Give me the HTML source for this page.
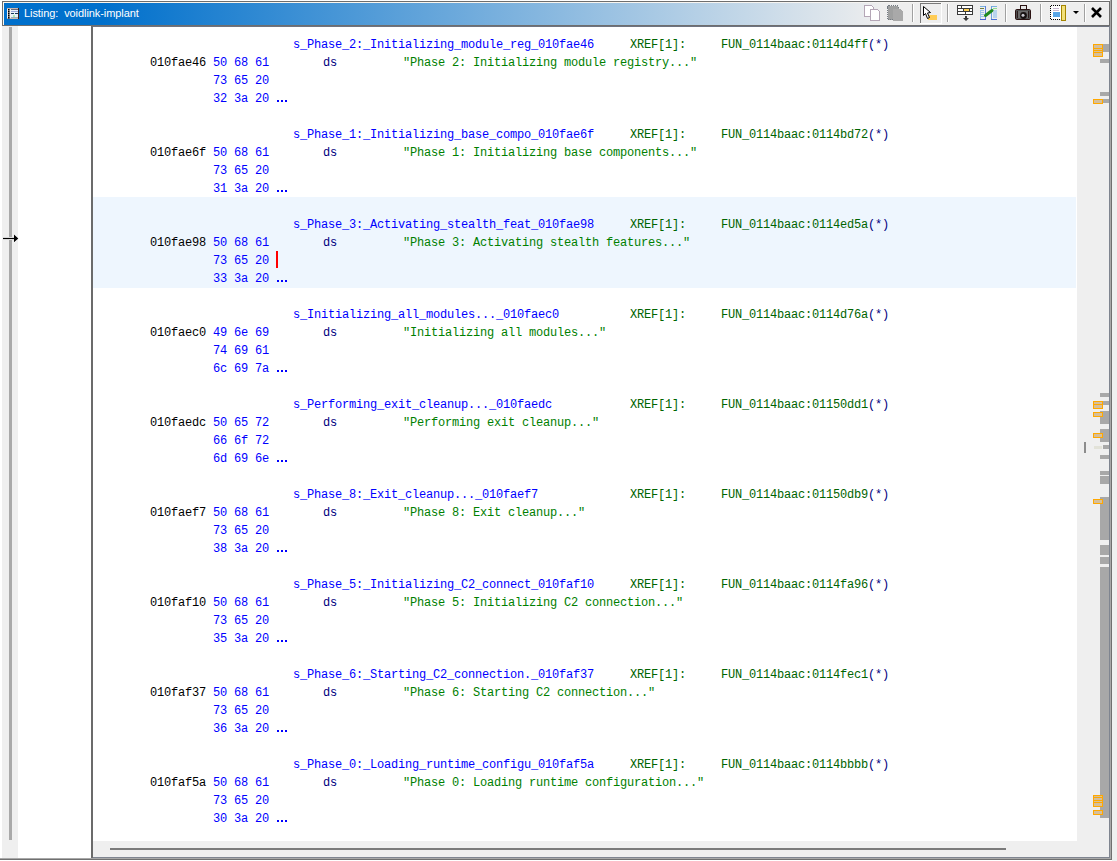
<!DOCTYPE html>
<html><head><meta charset="utf-8">
<style>
html,body{margin:0;padding:0}
body{width:1117px;height:861px;position:relative;overflow:hidden;background:#fff;font-family:"Liberation Sans",sans-serif}
.a{position:absolute}
#title{position:absolute;left:2px;top:1px;width:1106px;height:23px;border:1px solid #6e6e6e;
  background:linear-gradient(to right,#0070cc 0px,#0070cc 100px,#eeeeee 880px,#eeeeee 100%);}
#title .hl{position:absolute;left:0;top:0;width:100%;height:1px;background:linear-gradient(to right,#fdf6ea,#f4f4f4)}
#title .hl2{position:absolute;left:0;top:0;width:1px;height:100%;background:#fdf8ee}
#ttext{position:absolute;left:21px;top:4px;font-size:11px;letter-spacing:-0.08px;line-height:14px;color:#fff;white-space:pre}
.t{position:absolute;font-family:"Liberation Mono",monospace;font-size:12px;letter-spacing:-0.2px;line-height:18px;white-space:pre;height:18px}
.lab{color:#0000ff}
.xr{color:#006400}
.nv{color:#000080}
.adr{color:#000000}
.byt{color:#0000ff}
.str{color:#008000}
.ell{position:absolute;width:12px;height:3px}
.ell i{position:absolute;top:0;width:2px;height:2px;background:#0000ff}
.ell i:nth-child(1){left:0px}.ell i:nth-child(2){left:4px}.ell i:nth-child(3){left:8px}
.gb{position:absolute;background:#a8a8a8}
.mk{position:absolute;left:1093px;width:10px;background:#ffa800}
.mk b{position:absolute;left:1px;width:8px;background:#d5bf9c}
.sep{position:absolute;top:4px;width:1px;height:18px;background:#8a8a8a}
</style></head><body>
<!-- right outside -->
<div class="a" style="left:1112px;top:0;width:5px;height:861px;background:#f0f0f0"></div>
<!-- title bar -->
<div id="title"><div class="hl"></div><div class="hl2"></div>
  <div id="ttext">Listing:  voidlink-implant</div>
</div>
<!-- title icon -->
<svg class="a" style="left:0;top:0" width="24" height="24" viewBox="0 0 24 24" shape-rendering="crispEdges">
  <rect x="7" y="8" width="12" height="11" fill="#c8b8b0"/>
  <rect x="7" y="9" width="4" height="9" fill="#f4f0f0"/>
  <rect x="8" y="9" width="1" height="1" fill="#000"/><rect x="8" y="11" width="1" height="1" fill="#000"/><rect x="8" y="13" width="1" height="1" fill="#000"/><rect x="8" y="15" width="1" height="1" fill="#000"/><rect x="8" y="17" width="1" height="1" fill="#000"/>
  <rect x="8" y="9" width="1.6" height="1.6" fill="#000" shape-rendering="auto"/><rect x="8" y="11" width="1.6" height="1.6" fill="#000" shape-rendering="auto"/><rect x="8" y="13" width="1.6" height="1.6" fill="#000" shape-rendering="auto"/><rect x="8" y="15" width="1.6" height="1.6" fill="#000" shape-rendering="auto"/><rect x="8" y="17" width="1.6" height="1.6" fill="#000" shape-rendering="auto"/>
  <rect x="11" y="9" width="7" height="9" fill="#e8f0f8"/>
  <rect x="11" y="9" width="7" height="1" fill="#6a6a7a"/>
  <rect x="11" y="11" width="7" height="1" fill="#9aa8d8"/>
  <rect x="11" y="13" width="3" height="1" fill="#183858"/><rect x="15" y="13" width="3" height="1" fill="#183858"/>
  <rect x="13" y="15" width="2" height="2" fill="#b0e8b0"/>
  <rect x="11" y="17" width="7" height="1" fill="#98b0b8"/>
  <rect x="18" y="8" width="1" height="11" fill="#3a2020"/>
</svg>
<!-- left strip -->
<div class="a" style="left:2px;top:26px;width:16px;height:832px;background:#efefef"></div>
<div class="a" style="left:9px;top:27px;width:3px;height:813px;background:#a9a9a9"></div>
<!-- arrow -->
<svg class="a" style="left:2px;top:232px" width="18" height="12" viewBox="0 0 18 12">
  <line x1="1" y1="6.5" x2="13" y2="6.5" stroke="#fff" stroke-width="3"/>
  <polygon points="12,1.5 17,6.5 12,11.5" fill="#fff"/>
  <line x1="1" y1="6.5" x2="13" y2="6.5" stroke="#000" stroke-width="1.3"/>
  <polygon points="12,2.5 16.3,6.5 12,10.3" fill="#000"/>
</svg>
<!-- divider -->
<div class="a" style="left:91px;top:26px;width:2px;height:832px;background:#6b6b6b"></div>
<div class="a" style="left:93px;top:26px;width:1016px;height:1px;background:#6e7380"></div>
<!-- highlight band -->
<div class="a" style="left:93px;top:197px;width:983px;height:91px;background:#eef6fe"></div>
<!-- overview bar -->
<div class="a" style="left:1077px;top:27px;width:32px;height:830px;background:#efefef"></div>
<div class="a" style="left:1084px;top:442px;width:2px;height:11px;background:#8c8c8c"></div>
<div class="gb" style="left:1103px;top:44px;width:6px;height:8px"></div>
<div class="gb" style="left:1100px;top:59px;width:9px;height:4px"></div>
<div class="gb" style="left:1100px;top:92px;width:9px;height:4px"></div>
<div class="gb" style="left:1103px;top:99px;width:6px;height:4px"></div>
<div class="gb" style="left:1100px;top:393px;width:9px;height:4px"></div>
<div class="gb" style="left:1103px;top:401px;width:6px;height:4px"></div>
<div class="gb" style="left:1100px;top:411px;width:9px;height:13px"></div>
<div class="gb" style="left:1100px;top:429px;width:9px;height:13px"></div>
<div class="gb" style="left:1103px;top:445px;width:6px;height:4px"></div>
<div class="gb" style="left:1100px;top:455px;width:9px;height:4px"></div>
<div class="gb" style="left:1100px;top:471px;width:9px;height:4px"></div>
<div class="gb" style="left:1100px;top:476px;width:9px;height:8px"></div>
<div class="gb" style="left:1100px;top:497px;width:9px;height:43px"></div>
<div class="gb" style="left:1100px;top:545px;width:9px;height:10px"></div>
<div class="gb" style="left:1100px;top:557px;width:9px;height:7px"></div>
<div class="gb" style="left:1100px;top:567px;width:9px;height:251px"></div>
<div class="mk" style="top:44px;height:13px"><b style="top:1px;height:3px"></b><b style="top:5px;height:1px"></b><b style="top:7px;height:1px"></b><b style="top:9px;height:3px"></b></div>
<div class="mk" style="top:99px;height:5px"><b style="top:1px;height:3px"></b></div>
<div class="mk" style="top:401px;height:8px"><b style="top:1px;height:2px"></b><b style="top:4px;height:3px"></b></div>
<div class="mk" style="top:412px;height:5px"><b style="top:1px;height:3px"></b></div>
<div class="mk" style="top:433px;height:5px"><b style="top:1px;height:3px"></b></div>
<div class="mk" style="top:499px;height:5px"><b style="top:1px;height:3px"></b></div>
<div class="mk" style="top:795px;height:12px"><b style="top:1px;height:1px"></b><b style="top:3px;height:2px"></b><b style="top:6px;height:1px"></b><b style="top:8px;height:3px"></b></div>
<div class="mk" style="top:810px;height:5px"><b style="top:1px;height:3px"></b></div>
<div class="a" style="left:1094px;top:446px;width:8px;height:3px;background:#e2e2d8"></div>

<!-- h scrollbar -->
<div class="a" style="left:93px;top:841px;width:984px;height:16px;background:#efefef"></div>
<div class="a" style="left:110px;top:848px;width:896px;height:2px;background:#7a7a7a"></div>
<!-- frame lines -->
<div class="a" style="left:93px;top:857px;width:1017px;height:1px;background:#7f8590"></div>
<div class="a" style="left:0px;top:858px;width:1111px;height:1px;background:#a8a8a8"></div>
<div class="a" style="left:0px;top:859px;width:1112px;height:1px;background:#707070"></div>
<div class="a" style="left:1109px;top:26px;width:1px;height:832px;background:#7f8590"></div>
<div class="a" style="left:1110px;top:0px;width:1px;height:859px;background:#a8a8a8"></div>
<div class="a" style="left:1111px;top:0px;width:1px;height:860px;background:#707070"></div>
<!-- red cursor -->
<div class="a" style="left:276px;top:251px;width:2px;height:17px;background:#ff0000"></div>
<div class="t lab" style="left:293px;top:36px">s_Phase_2:_Initializing_module_reg_010fae46</div>
<div class="t xr" style="left:630px;top:36px">XREF[1]:</div>
<div class="t xr" style="left:721px;top:36px">FUN_0114baac:0114d4ff<span class="nv">(*)</span></div>
<div class="t adr" style="left:150px;top:54px">010fae46</div>
<div class="t byt" style="left:213px;top:54px">50 68 61</div>
<div class="t nv" style="left:323px;top:54px">ds</div>
<div class="t str" style="left:403px;top:54px">"Phase 2: Initializing module registry..."</div>
<div class="t byt" style="left:213px;top:72px">73 65 20</div>
<div class="t byt" style="left:213px;top:90px">32 3a 20</div>
<div class="ell" style="left:277px;top:100px"><i></i><i></i><i></i></div>
<div class="t lab" style="left:293px;top:126px">s_Phase_1:_Initializing_base_compo_010fae6f</div>
<div class="t xr" style="left:630px;top:126px">XREF[1]:</div>
<div class="t xr" style="left:721px;top:126px">FUN_0114baac:0114bd72<span class="nv">(*)</span></div>
<div class="t adr" style="left:150px;top:144px">010fae6f</div>
<div class="t byt" style="left:213px;top:144px">50 68 61</div>
<div class="t nv" style="left:323px;top:144px">ds</div>
<div class="t str" style="left:403px;top:144px">"Phase 1: Initializing base components..."</div>
<div class="t byt" style="left:213px;top:162px">73 65 20</div>
<div class="t byt" style="left:213px;top:180px">31 3a 20</div>
<div class="ell" style="left:277px;top:190px"><i></i><i></i><i></i></div>
<div class="t lab" style="left:293px;top:216px">s_Phase_3:_Activating_stealth_feat_010fae98</div>
<div class="t xr" style="left:630px;top:216px">XREF[1]:</div>
<div class="t xr" style="left:721px;top:216px">FUN_0114baac:0114ed5a<span class="nv">(*)</span></div>
<div class="t adr" style="left:150px;top:234px">010fae98</div>
<div class="t byt" style="left:213px;top:234px">50 68 61</div>
<div class="t nv" style="left:323px;top:234px">ds</div>
<div class="t str" style="left:403px;top:234px">"Phase 3: Activating stealth features..."</div>
<div class="t byt" style="left:213px;top:252px">73 65 20</div>
<div class="t byt" style="left:213px;top:270px">33 3a 20</div>
<div class="ell" style="left:277px;top:280px"><i></i><i></i><i></i></div>
<div class="t lab" style="left:293px;top:306px">s_Initializing_all_modules..._010faec0</div>
<div class="t xr" style="left:630px;top:306px">XREF[1]:</div>
<div class="t xr" style="left:721px;top:306px">FUN_0114baac:0114d76a<span class="nv">(*)</span></div>
<div class="t adr" style="left:150px;top:324px">010faec0</div>
<div class="t byt" style="left:213px;top:324px">49 6e 69</div>
<div class="t nv" style="left:323px;top:324px">ds</div>
<div class="t str" style="left:403px;top:324px">"Initializing all modules..."</div>
<div class="t byt" style="left:213px;top:342px">74 69 61</div>
<div class="t byt" style="left:213px;top:360px">6c 69 7a</div>
<div class="ell" style="left:277px;top:370px"><i></i><i></i><i></i></div>
<div class="t lab" style="left:293px;top:396px">s_Performing_exit_cleanup..._010faedc</div>
<div class="t xr" style="left:630px;top:396px">XREF[1]:</div>
<div class="t xr" style="left:721px;top:396px">FUN_0114baac:01150dd1<span class="nv">(*)</span></div>
<div class="t adr" style="left:150px;top:414px">010faedc</div>
<div class="t byt" style="left:213px;top:414px">50 65 72</div>
<div class="t nv" style="left:323px;top:414px">ds</div>
<div class="t str" style="left:403px;top:414px">"Performing exit cleanup..."</div>
<div class="t byt" style="left:213px;top:432px">66 6f 72</div>
<div class="t byt" style="left:213px;top:450px">6d 69 6e</div>
<div class="ell" style="left:277px;top:460px"><i></i><i></i><i></i></div>
<div class="t lab" style="left:293px;top:486px">s_Phase_8:_Exit_cleanup..._010faef7</div>
<div class="t xr" style="left:630px;top:486px">XREF[1]:</div>
<div class="t xr" style="left:721px;top:486px">FUN_0114baac:01150db9<span class="nv">(*)</span></div>
<div class="t adr" style="left:150px;top:504px">010faef7</div>
<div class="t byt" style="left:213px;top:504px">50 68 61</div>
<div class="t nv" style="left:323px;top:504px">ds</div>
<div class="t str" style="left:403px;top:504px">"Phase 8: Exit cleanup..."</div>
<div class="t byt" style="left:213px;top:522px">73 65 20</div>
<div class="t byt" style="left:213px;top:540px">38 3a 20</div>
<div class="ell" style="left:277px;top:550px"><i></i><i></i><i></i></div>
<div class="t lab" style="left:293px;top:576px">s_Phase_5:_Initializing_C2_connect_010faf10</div>
<div class="t xr" style="left:630px;top:576px">XREF[1]:</div>
<div class="t xr" style="left:721px;top:576px">FUN_0114baac:0114fa96<span class="nv">(*)</span></div>
<div class="t adr" style="left:150px;top:594px">010faf10</div>
<div class="t byt" style="left:213px;top:594px">50 68 61</div>
<div class="t nv" style="left:323px;top:594px">ds</div>
<div class="t str" style="left:403px;top:594px">"Phase 5: Initializing C2 connection..."</div>
<div class="t byt" style="left:213px;top:612px">73 65 20</div>
<div class="t byt" style="left:213px;top:630px">35 3a 20</div>
<div class="ell" style="left:277px;top:640px"><i></i><i></i><i></i></div>
<div class="t lab" style="left:293px;top:666px">s_Phase_6:_Starting_C2_connection._010faf37</div>
<div class="t xr" style="left:630px;top:666px">XREF[1]:</div>
<div class="t xr" style="left:721px;top:666px">FUN_0114baac:0114fec1<span class="nv">(*)</span></div>
<div class="t adr" style="left:150px;top:684px">010faf37</div>
<div class="t byt" style="left:213px;top:684px">50 68 61</div>
<div class="t nv" style="left:323px;top:684px">ds</div>
<div class="t str" style="left:403px;top:684px">"Phase 6: Starting C2 connection..."</div>
<div class="t byt" style="left:213px;top:702px">73 65 20</div>
<div class="t byt" style="left:213px;top:720px">36 3a 20</div>
<div class="ell" style="left:277px;top:730px"><i></i><i></i><i></i></div>
<div class="t lab" style="left:293px;top:756px">s_Phase_0:_Loading_runtime_configu_010faf5a</div>
<div class="t xr" style="left:630px;top:756px">XREF[1]:</div>
<div class="t xr" style="left:721px;top:756px">FUN_0114baac:0114bbbb<span class="nv">(*)</span></div>
<div class="t adr" style="left:150px;top:774px">010faf5a</div>
<div class="t byt" style="left:213px;top:774px">50 68 61</div>
<div class="t nv" style="left:323px;top:774px">ds</div>
<div class="t str" style="left:403px;top:774px">"Phase 0: Loading runtime configuration..."</div>
<div class="t byt" style="left:213px;top:792px">73 65 20</div>
<div class="t byt" style="left:213px;top:810px">30 3a 20</div>
<div class="ell" style="left:277px;top:820px"><i></i><i></i><i></i></div>

<!-- toolbar -->
<svg class="a" style="left:0;top:0" width="1117" height="26" viewBox="0 0 1117 26" shape-rendering="crispEdges">
 <!-- copy icon -->
 <g>
  <path d="M864.5 5.5 H871.5 L873.5 7.5 V16.5 H864.5 Z" fill="#fff" stroke="#b4a6b6"/>
  <path d="M870.5 9.5 H877.5 L879.5 11.5 V20.5 H870.5 Z" fill="#fff" stroke="#b4a6b6"/>
 </g>
 <!-- paste disabled -->
 <g>
  <path d="M887.5 7.5 Q887.5 5.5 889.5 5.5 H896.5 Q898.5 5.5 898.5 7.5 V19.5 H887.5 Z" fill="#9fa0a0" stroke="#737a82" stroke-dasharray="1 1"/>
  <path d="M893 9 H900 L903 12 V21 H893 Z" fill="#a9a9a9"/>
 </g>
 <!-- separators -->
 <g fill="#a0a0a0">
  <rect x="912" y="4" width="1" height="18"/><rect x="947" y="4" width="1" height="18"/>
  <rect x="1005" y="4" width="1" height="18"/><rect x="1040" y="4" width="1" height="18"/>
  <rect x="1084" y="4" width="1" height="18"/>
 </g>
 <g fill="#ffffff">
  <rect x="913" y="4" width="1" height="18"/><rect x="948" y="4" width="1" height="18"/>
  <rect x="1006" y="4" width="1" height="18"/><rect x="1041" y="4" width="1" height="18"/>
  <rect x="1085" y="4" width="1" height="18"/>
 </g>
 <!-- pressed button -->
 <rect x="920" y="3" width="21" height="1" fill="#7a7a7a"/>
 <rect x="920" y="3" width="1" height="21" fill="#7a7a7a"/>
 <rect x="941" y="3" width="1" height="21" fill="#ffffff"/>
 <rect x="920" y="23" width="22" height="1" fill="#ffffff"/>
 <!-- cursor -->
 <rect x="928" y="15" width="9" height="5" fill="#ffcc55"/>
 <path d="M923.5 6.5 V15.5 L925.5 13.5 L927.5 18.5 L929.5 17.5 L927.5 13 L930.5 12.5 Z" fill="#fff" stroke="#000" shape-rendering="auto"/>
 <!-- field icon -->
 <rect x="957" y="5" width="16" height="10" fill="#3a3a3a"/>
 <rect x="958" y="6" width="3" height="2" fill="#fff"/><rect x="962" y="6" width="10" height="2" fill="#fff"/>
 <rect x="958" y="9" width="5" height="2" fill="#fff"/><rect x="964" y="9" width="5" height="2" fill="#ffd050"/><rect x="970" y="9" width="2" height="2" fill="#fff"/>
 <rect x="958" y="12" width="7" height="2" fill="#fff"/><rect x="966" y="12" width="6" height="2" fill="#fff"/>
 <path d="M965 16 H967 V18 H969 L966 21 L963 18 H965 Z" fill="#3a3a3a" shape-rendering="auto"/>
 <!-- diff icon -->
 <rect x="980" y="6" width="6" height="1" fill="#7ab0e0"/>
 <rect x="985" y="6" width="1" height="14" fill="#5a7ed8"/>
 <rect x="980" y="19" width="6" height="1" fill="#4a62d0"/>
 <rect x="980" y="8" width="4" height="1" fill="#6f7f40"/>
 <rect x="980" y="10" width="1" height="9" fill="#9cc4e8"/>
 <rect x="980" y="10" width="4" height="1" fill="#9cc4e8"/><rect x="980" y="12" width="4" height="1" fill="#9cc4e8"/>
 <rect x="980" y="14" width="4" height="1" fill="#9cc4e8"/><rect x="980" y="16" width="4" height="1" fill="#9cc4e8"/>
 <rect x="991" y="6" width="6" height="1" fill="#7ab0e0"/>
 <rect x="991" y="6" width="1" height="14" fill="#6aa0dc"/>
 <rect x="991" y="19" width="6" height="1" fill="#4a70d8"/>
 <rect x="993" y="8" width="4" height="1" fill="#90e090"/>
 <rect x="993" y="10" width="4" height="8" fill="#b8d4ee"/>
 <path d="M985.5 15.5 L992 10.5" stroke="#1f8a1f" stroke-width="3" stroke-linecap="round" shape-rendering="auto"/>
 <!-- camera -->
 <g shape-rendering="auto">
  <rect x="1020.5" y="5.5" width="6" height="4" fill="#e4e4e4" stroke="#2a1212"/>
  <rect x="1015.5" y="9.5" width="15" height="10" rx="1.2" fill="#4e4e4e" stroke="#2a1212"/>
  <rect x="1017" y="11" width="12" height="7" fill="#6a6a6a"/>
  <rect x="1017" y="11" width="1" height="7" fill="#2a1a1a"/>
  <rect x="1028" y="11" width="1" height="7" fill="#2a1a1a"/>
  <circle cx="1023.5" cy="15.5" r="3.4" fill="#151010"/>
  <circle cx="1023" cy="15.2" r="1.5" fill="#c8c8d0"/>
 </g>
<!-- snapshot -->
 <rect x="1051" y="6" width="10" height="13" fill="#fff"/>
 <path d="M1050.5 5.5 H1061 M1050.5 19.5 H1061 M1050.5 5.5 V19.5" stroke="#000" stroke-dasharray="1 1"/>
 <rect x="1053" y="8" width="6" height="1" fill="#c8b8d0"/><rect x="1053" y="10" width="6" height="1" fill="#c8b8d0"/>
 <rect x="1053" y="12" width="7" height="5" fill="#5aa6e6"/>
 <rect x="1061" y="5" width="5" height="16" fill="#a48400"/>
 <rect x="1062" y="6" width="3" height="14" fill="#f2e07a"/>
 <!-- dropdown -->
 <path d="M1073 11 H1079 L1076 14 Z" fill="#000" shape-rendering="auto"/>
 <!-- close -->
 <path d="M1092 8 L1101 17 M1101 8 L1092 17" stroke="#000" stroke-width="2.6" shape-rendering="auto"/>
</svg>

</body></html>
